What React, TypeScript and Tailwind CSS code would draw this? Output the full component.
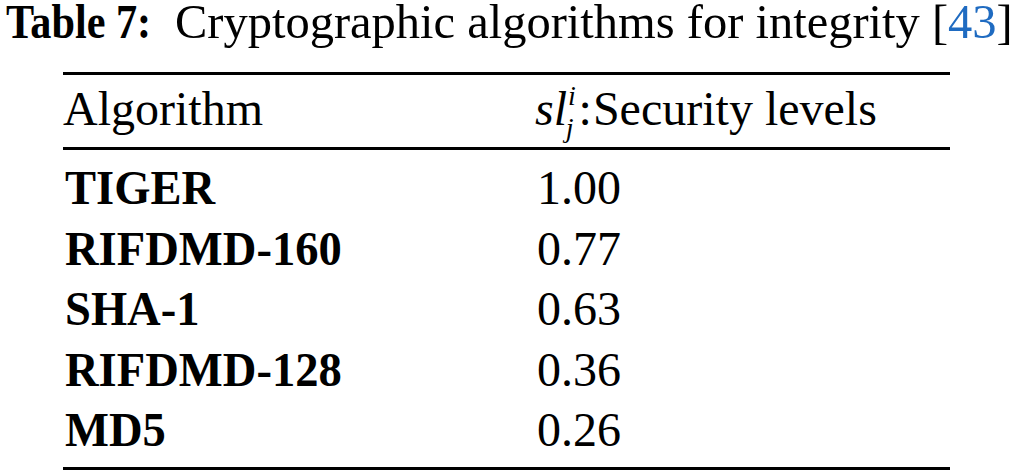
import React from "react";

const rows = [
  { name: "TIGER", level: "1.00" },
  { name: "RIFDMD-160", level: "0.77" },
  { name: "SHA-1", level: "0.63" },
  { name: "RIFDMD-128", level: "0.36" },
  { name: "MD5", level: "0.26" },
];

export default function App() {
  return (
    <div className="w-[1017px] h-[475px] bg-white text-black font-['Liberation_Serif','Times_New_Roman',serif] overflow-hidden">
      {/* Caption */}
      <div className="pt-[1px] pl-[6px] text-[48px] leading-[41px] whitespace-nowrap flex items-baseline">
        <span className="inline-block font-bold origin-left scale-x-[0.88]">Table 7:</span>
        <span className="ml-[4px] text-[48.5px]">
          Cryptographic algorithms for integrity [<span className="text-[#1f6bc1]">43</span>]
        </span>
      </div>

      {/* Table */}
      <div className="ml-[63px] w-[887px] mt-[30px]">
        <div className="h-[3px] bg-black" />

        <div className="flex pt-[10px] text-[48px] leading-[48px] whitespace-nowrap">
          <div className="w-[472px] shrink-0">Algorithm</div>
          <div>
            <span className="italic">sl</span>
            <span className="relative -top-[20px] italic text-[28px] leading-none ml-[1px]">i</span>
            <span className="relative top-[12px] italic text-[28px] leading-none -ml-[10px]">j</span>
            <span className="ml-[5px]">:</span>
            <span className="ml-[1px]">Security levels</span>
          </div>
        </div>

        <div className="h-[3px] bg-black mt-[14px]" />

        <div className="pt-[8px]">
          {rows.map((r) => (
            <div key={r.name} className="flex text-[48px] leading-[60.5px] whitespace-nowrap">
              <div className="w-[474px] shrink-0 pl-[2px]">
                <span className="inline-block font-bold origin-left scale-x-[0.97]">{r.name}</span>
              </div>
              <div>{r.level}</div>
            </div>
          ))}
        </div>

        <div className="h-[3px] bg-black mt-[6px]" />
      </div>
    </div>
  );
}
